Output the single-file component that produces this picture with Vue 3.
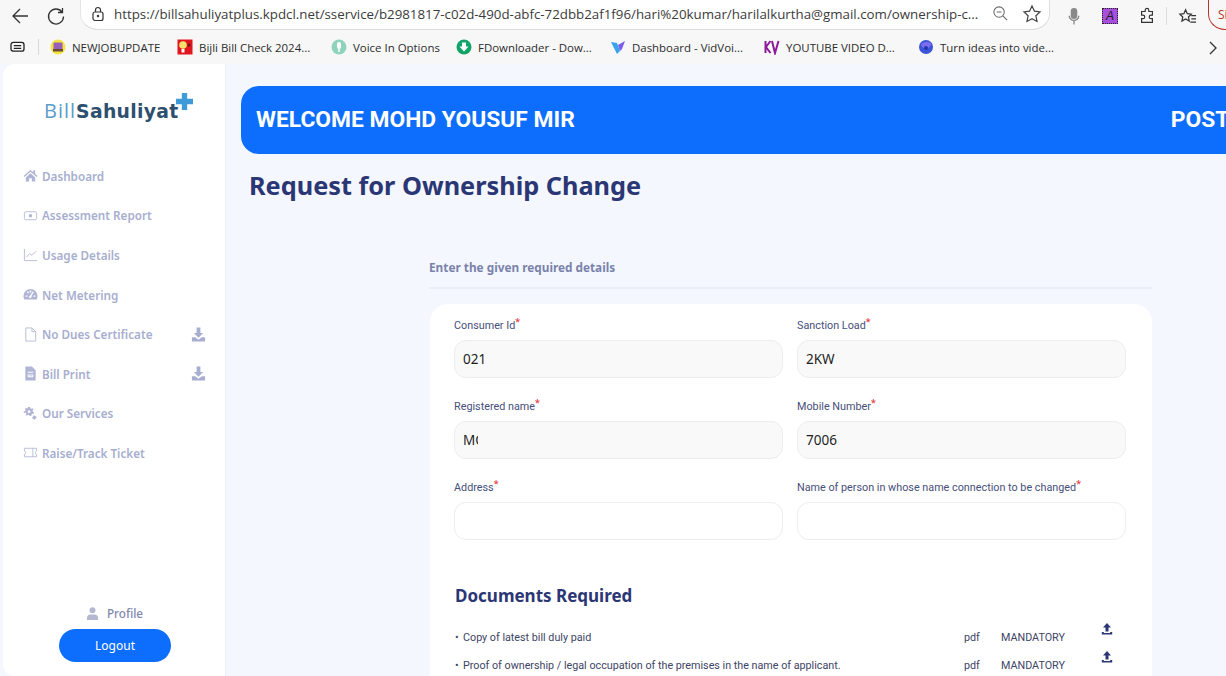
<script setup>
const bookmarks = [
  { icon: 'job', text: 'NEWJOBUPDATE', w: 127 },
  { icon: 'bulb', text: 'Bijli Bill Check 2024...', w: 154 },
  { icon: 'voice', text: 'Voice In Options', w: 125 },
  { icon: 'down', text: 'FDownloader - Dow...', w: 154 },
  { icon: 'vid', text: 'Dashboard - VidVoi...', w: 154 },
  { icon: 'kv', text: 'YOUTUBE VIDEO D...', w: 154 },
  { icon: 'turn', text: 'Turn ideas into vide...', w: 150 }
]

const menu = [
  { icon: 'home', text: 'Dashboard' },
  { icon: 'report', text: 'Assessment Report' },
  { icon: 'chart', text: 'Usage Details' },
  { icon: 'gauge', text: 'Net Metering' },
  { icon: 'file', text: 'No Dues Certificate', download: true },
  { icon: 'print', text: 'Bill Print', download: true },
  { icon: 'gears', text: 'Our Services' },
  { icon: 'ticket', text: 'Raise/Track Ticket' }
]

const fields = [
  { label: 'Consumer Id', value: '021', filled: true },
  { label: 'Sanction Load', value: '2KW', filled: true },
  { label: 'Registered name', value: 'MO', filled: true, cut: true },
  { label: 'Mobile Number', value: '7006', filled: true },
  { label: 'Address', value: '' },
  { label: 'Name of person in whose name connection to be changed', value: '' }
]

const docs = [
  'Copy of latest bill duly paid',
  'Proof of ownership / legal occupation of the premises in the name of applicant.'
]
</script>

<template>
  <div class="screen">
    <header class="toolbar">
      <svg class="tool-icon" viewBox="0 0 20 20"><path d="M18 10H3M10 3l-7 7 7 7" /></svg>
      <svg class="tool-icon" viewBox="0 0 20 20"><path d="M16 6a7.5 7.5 0 1 0 1.5 4.5M16.5 2v4.5H12" /></svg>
      <div class="address">
        <svg class="lock" viewBox="0 0 16 16"><rect x="3" y="6" width="10" height="8.5" rx="2" /><path d="M5.5 6V4a2.5 2.5 0 0 1 5 0v2" /><circle cx="8" cy="10" r=".6" /></svg>
        <span class="url">https://billsahuliyatplus.kpdcl.net/sservice/b2981817-c02d-490d-abfc-72dbb2af1f96/hari%20kumar/harilalkurtha@gmail.com/ownership-c...</span>
        <svg class="addr-icon" viewBox="0 0 18 18"><circle cx="7.5" cy="7.5" r="5.5" /><path d="M11.5 11.5L16 16M5 7.5h5" /></svg>
        <svg class="addr-icon star" viewBox="0 0 18 18"><path d="M9 1.8l2.2 4.7 5 .6-3.7 3.5 1 5.1L9 13.2l-4.500 2.500 1-5.100L1.800 7.100l5-.6z" /></svg>
      </div>
      <svg class="mic" viewBox="0 0 16 20"><rect x="5" y="1" width="6" height="11" rx="3" /><path d="M2.500 9a5.500 5.500 0 0 0 11 0M8 14.500V19" /></svg>
      <div class="ext-a">A</div>
      <svg class="tool-icon puzzle" viewBox="0 0 20 20"><path d="M8 3.500a2 2 0 0 1 4 0V5h4v4h-1.500a2 2 0 0 0 0 4H16v4H4v-4h1.500a2 2 0 0 0 0-4H4V5h4z" /></svg>
      <span class="tool-sep"></span>
      <svg class="tool-icon favs" viewBox="0 0 20 20"><path d="M8 3l1.800 4 4.200.5-3 3 .8 4.200L8 12.600l-3.800 2.100.8-4.200-3-3L6.200 7zM14 9h5M14 12.500h5M13 16h6" /></svg>
      <div class="signin">Si</div>
    </header>

    <nav class="bookmarks">
      <svg class="book-tab" viewBox="0 0 16 14"><rect x="1" y="1.500" width="14" height="9.500" rx="2.500" /><path d="M4 5h8M4 8h8" /></svg>
      <span class="book-sep"></span>
      <div v-for="b in bookmarks" :key="b.text" class="bookmark" :style="{ width: b.w + 'px' }">
        <svg class="book-icon" viewBox="0 0 16 16">
          <template v-if="b.icon === 'job'">
            <circle cx="8" cy="8" r="7.500" fill="#f4e43e" />
            <rect x="3.500" y="3.500" width="9" height="8" rx="1" fill="#9a5fb8" />
            <rect x="3" y="10" width="10" height="2.500" fill="#6b4a3a" />
          </template>
          <template v-else-if="b.icon === 'bulb'">
            <rect x=".5" y=".5" width="15" height="15" fill="#e0161e" />
            <circle cx="6" cy="6" r="3.800" fill="#f8e16a" />
            <rect x="4.500" y="10" width="3" height="3.500" fill="#fff" />
            <circle cx="12" cy="6" r="1.500" fill="#6b1a22" />
          </template>
          <template v-else-if="b.icon === 'voice'">
            <circle cx="8" cy="8" r="7.500" fill="#8fd3bd" />
            <rect x="6" y="3" width="4" height="7" rx="2" fill="#fff" />
            <path d="M8 10v3" stroke="#fff" stroke-width="1.500" />
          </template>
          <template v-else-if="b.icon === 'down'">
            <circle cx="8" cy="8" r="7.500" fill="#12a36a" />
            <path d="M6 3.500h4v4h2.500L8 12.500 3.500 7.500H6z" fill="#fff" />
          </template>
          <template v-else-if="b.icon === 'vid'">
            <path d="M1 3l6 1 3 8-3 3z" fill="#36a3f0" />
            <path d="M8 6l7-4-3 8-2 2z" fill="#7c5cf0" />
          </template>
          <template v-else-if="b.icon === 'kv'">
            <path d="M1.500 2v12M6.500 2L2 8l4.500 6M8 2l3 12 3.500-12" fill="none" stroke="#8d1a9a" stroke-width="2" />
          </template>
          <template v-else>
            <circle cx="8" cy="8" r="7" fill="#3a55d8" />
            <path d="M3 5a7 5 0 0 1 10-1 5 5 0 0 1-10 1z" fill="#7d6cf0" />
            <circle cx="8" cy="9" r="2" fill="#2238a8" />
          </template>
        </svg>
        <span>{{ b.text }}</span>
      </div>
      <svg class="book-more" viewBox="0 0 10 14"><path d="M2 1l6 6-6 6" /></svg>
    </nav>

    <div class="page">
      <aside class="sidebar">
        <div class="logo">
          <span class="logo-bill">Bill</span><span class="logo-name">Sahuliyat</span>
          <svg class="logo-plus" viewBox="0 0 16 16"><path d="M5.500 0h5v5.500H16v5h-5.500V16h-5v-5.500H0v-5h5.500z" /></svg>
        </div>

        <ul class="menu">
          <li v-for="m in menu" :key="m.text" class="menu-item">
            <svg class="menu-icon" viewBox="0 0 16 16">
              <path v-if="m.icon === 'home'" class="solid" d="M8 2L.5 8.500l1 1L8 4l6.500 5.500 1-1-2.500-2.200V2.500h-2v2zM3 10v4.500h3.500v-3.500h3v3.500H13V10L8 5.500z" />
              <template v-else-if="m.icon === 'report'">
                <rect class="line" x="1.500" y="4" width="13" height="8.500" rx="1.500" />
                <circle class="solid" cx="8" cy="8.200" r="1.800" />
              </template>
              <path v-else-if="m.icon === 'chart'" class="line" d="M1.500 2v12.500H15M3.500 11l3.500-4 2.500 2L14 4.500" />
              <path v-else-if="m.icon === 'gauge'" class="solid" d="M8 2a7.500 7.500 0 0 0-7.500 7.500c0 1.400.4 2.700 1 3.800h13c.6-1.100 1-2.400 1-3.800A7.500 7.500 0 0 0 8 2zm-.8 1.800h1.600v2H7.200zM2.800 9h2v1.500h-2zm8.400 0h2v1.500h-2zM4 5.500l1.100-1 1.400 1.400-1.100 1.100zM10.500 4.500l1 1L9 9.700A1.400 1.400 0 1 1 7.700 9z" />
              <path v-else-if="m.icon === 'file'" class="line" d="M3 1h6.500L13.500 5v10H3zM9.500 1v4h4" />
              <path v-else-if="m.icon === 'print'" class="solid" d="M2.500 0.500h7l4 4v11h-11zM5 6v1.300h6V6zm0 3v3h6V9zm1 1h4v1H6z" />
              <path v-else-if="m.icon === 'gears'" class="solid" d="M5.500 1h2l.3 1.400 1.200.6 1.200-.7 1 1.300-.9 1.100.2 1.300 1.300.6-.4 1.700-1.500-.1-.9 1-.1 1.300-1.700.3-.6-1.200-1.400-.2-1 .9-1.300-1 .7-1.300-.5-1.200L.8 7.500V5.800l1.400-.4.6-1.200-.6-1.200L3.400 2l1.200.7zM6.500 4.500a1.500 1.500 0 1 0 0 3 1.500 1.500 0 0 0 0-3zM12.500 10l.5 1 1.200.1.200 1.300-1 .6-.1 1.200-1.300.4-.7-1-1.200-.1-.4-1.200 1-.7v-1.200z" />
              <path v-else class="line" d="M1.500 3.500h13v3a1.800 1.800 0 0 0 0 3.500v2.500h-13V10a1.800 1.800 0 0 0 0-3.500zM10.500 3.500v9" />
            </svg>
            <span class="menu-text">{{ m.text }}</span>
            <svg v-if="m.download" class="menu-dl" viewBox="0 0 16 16"><path d="M6 .5h4v6h3L8 11.500 3 6.500h3zM1 11h3.500L8 13.500 11.500 11H15v4.500H1z" /></svg>
          </li>
        </ul>

        <div class="side-foot">
          <div class="profile">
            <svg class="profile-icon" viewBox="0 0 12 14"><circle cx="6" cy="3.500" r="3.200" /><path d="M0 14v-2.500C0 9.500 1.500 8 3.500 8h5c2 0 3.500 1.500 3.500 3.500V14z" /></svg>
            <span>Profile</span>
          </div>
          <button class="logout">Logout</button>
        </div>
      </aside>

      <main class="main">
        <div class="banner">
          <span>WELCOME MOHD YOUSUF MIR</span>
          <span class="banner-post">POST</span>
        </div>
        <h1 class="title">Request for Ownership Change</h1>

        <section class="form-wrap">
          <h2 class="hint">Enter the given required details</h2>
          <div class="card">
            <div class="grid">
              <div v-for="f in fields" :key="f.label" class="field">
                <label class="label">{{ f.label }}<sup>*</sup></label>
                <div class="input" :class="{ filled: f.filled }">
                  <span :class="{ cut: f.cut }">{{ f.value }}</span>
                </div>
              </div>
            </div>

            <h3 class="docs-title">Documents Required</h3>
            <div class="docs">
              <div v-for="d in docs" :key="d" class="doc">
                <span class="doc-name"><i class="dot">•</i>{{ d }}</span>
                <span class="doc-type">pdf</span>
                <span class="doc-flag">MANDATORY</span>
                <svg class="doc-up" viewBox="0 0 12 12"><path d="M6 .5L10 5H7.500v4h-3V5H2zM.8 9.500h2v1h6.400v-1h2V12H.8z" /></svg>
              </div>
            </div>
          </div>
        </section>
      </main>
    </div>
  </div>
</template>

<style scoped>
.screen {
  width: 1226px;
  height: 676px;
  overflow: hidden;
  display: flex;
  flex-direction: column;
  background: #f4f7fe;
  font-family: "Noto Sans", sans-serif;
}

.toolbar {
  height: 32px;
  display: flex;
  align-items: center;
  background: #f7f7f7;
  padding-left: 10px;
}

.tool-icon {
  width: 20px;
  height: 20px;
  margin-right: 16px;
  fill: none;
  stroke: #333;
  stroke-width: 1.300;
  flex: none;
}

.address {
  width: 970px;
  height: 32px;
  margin: -4px 0 0 -2px;
  flex: none;
  display: flex;
  align-items: center;
  background: #fff;
  border: 1px solid #dcdcdc;
  border-top: none;
  border-radius: 0 0 18px 18px / 0 0 16px 16px;
  border-left-color: #e4e4e4;
  box-sizing: border-box;
  padding-left: 9px;
}

.lock {
  width: 16px;
  height: 16px;
  fill: none;
  stroke: #333;
  stroke-width: 1.200;
  flex: none;
}

.url {
  margin-left: 8px;
  width: 878px;
  flex: none;
  font: 13.320px "Open Sans", sans-serif;
  color: #3b3b3b;
  white-space: nowrap;
}

.addr-icon {
  width: 17px;
  height: 17px;
  fill: none;
  stroke: #666;
  stroke-width: 1.100;
  flex: none;
}

.star {
  margin-left: 13px;
  width: 20px;
  height: 20px;
  stroke: #444;
}

.mic {
  width: 14px;
  height: 19px;
  margin-left: 17px;
  flex: none;
  fill: #8a8a8a;
  stroke: #8a8a8a;
  stroke-width: 1.500;
}

.mic path {
  fill: none;
}

.ext-a {
  width: 16px;
  height: 16px;
  margin-left: 21px;
  background: #a64fdc;
  border: 1px dotted #222;
  box-sizing: border-box;
  font: italic 12px/14px "Liberation Sans", sans-serif;
  text-align: center;
  color: #1c1c1c;
  flex: none;
}

.puzzle {
  margin: 0 0 0 20px;
  width: 18px;
  height: 18px;
}

.tool-sep {
  width: 1px;
  height: 18px;
  background: #ddd;
  margin-left: 10px;
  flex: none;
}

.favs {
  margin: 0 0 0 11px;
  width: 19px;
  height: 19px;
}

.signin {
  width: 34px;
  height: 32px;
  margin: -4px 0 0 11px;
  flex: none;
  border: 1px solid #b8332e;
  border-top: none;
  border-radius: 0 0 17px 17px / 0 0 16px 16px;
  border-right: none;
  box-sizing: border-box;
  font: 12px/34px "Open Sans", sans-serif;
  color: #b8332e;
  padding-left: 9px;
}

.bookmarks {
  height: 32px;
  display: flex;
  align-items: center;
  background: #f7f7f7;
  padding: 0 0 2px 10px;
  box-sizing: border-box;
  font: 11.450px "Open Sans", sans-serif;
  color: #2c2c2c;
  white-space: nowrap;
  position: relative;
}

.book-tab {
  width: 15px;
  height: 13px;
  fill: none;
  stroke: #222;
  stroke-width: 1.400;
  flex: none;
}

.book-sep {
  width: 1px;
  height: 16px;
  background: #d8d8d8;
  margin: 0 11px 0 13px;
  flex: none;
}

.bookmark {
  flex: none;
  display: flex;
  align-items: center;
  gap: 6px;
}

.book-icon {
  width: 16px;
  height: 16px;
  flex: none;
}

.book-more {
  position: absolute;
  right: 8px;
  top: 9px;
  width: 10px;
  height: 14px;
  fill: none;
  stroke: #333;
  stroke-width: 1.300;
}

.page {
  flex: 1;
  min-height: 0;
  display: flex;
  padding-left: 3px;
}

.sidebar {
  width: 223px;
  flex: none;
  background: #fff;
  border-right: 1px solid #e9edf7;
  box-sizing: border-box;
  border-radius: 12px 0 0 12px;
  display: flex;
  flex-direction: column;
  height: 612px;
}

.logo {
  position: relative;
  margin: 35px 0 0 41px;
  height: 24px;
  font-size: 20px;
  line-height: 24px;
  letter-spacing: 1px;
  white-space: nowrap;
}

.logo-bill {
  color: #5a9cc9;
  font-family: "Open Sans", sans-serif;
  font-weight: 400;
}

.logo-name {
  color: #2f4f6f;
  font-family: "DejaVu Sans", sans-serif;
  font-size: 18.800px;
  font-weight: 700;
  letter-spacing: .3px;
}

.logo-plus {
  position: absolute;
  left: 132px;
  top: -6px;
  width: 17px;
  height: 17px;
  fill: #3f9bd8;
}

.menu {
  list-style: none;
  margin: 0;
  padding: 0 19px 0 20px;
  margin-top: 33px;
}

.menu-item {
  height: 39.600px;
  display: flex;
  align-items: center;
  gap: 4px;
  color: #a3aed0;
  font-size: 11.700px;
  font-weight: 600;
}

.menu-icon {
  width: 15px;
  height: 15px;
  flex: none;
}

.menu-icon .solid {
  fill: #b0b5d6;
}

.menu-icon .line {
  fill: none;
  stroke: #b9bdd9;
  stroke-width: 1;
}

.menu-text {
  flex: 1;
  color: #a7aecf;
}

.menu-dl {
  width: 15px;
  height: 15px;
  fill: #a9aed0;
  flex: none;
}

.side-foot {
  margin-top: auto;
  display: flex;
  flex-direction: column;
  align-items: center;
  padding: 0 0 14px 2px;
}

.profile {
  display: flex;
  align-items: center;
  gap: 9px;
  font-size: 11.700px;
  font-weight: 500;
  color: #8087ad;
  margin-bottom: 8px;
}

.profile-icon {
  width: 11px;
  height: 13px;
  fill: #b3b7d0;
}

.logout {
  width: 112px;
  height: 33px;
  border: none;
  border-radius: 17px;
  background: #0d6efd;
  color: #fff;
  font: 12px "Noto Sans", sans-serif;
  padding: 0;
}

.main {
  flex: 1;
  min-width: 0;
  padding: 22px 0 0 15px;
}

.banner {
  height: 68px;
  width: 1100px;
  background: #0d6efd;
  border-radius: 18px 0 0 18px;
  display: flex;
  align-items: center;
  padding: 0 0 2px 15px;
  color: #fff;
  font: 700 22.800px Roboto, sans-serif;
  white-space: nowrap;
  box-sizing: border-box;
}

.banner-post {
  margin-left: 596px;
}

.title {
  margin: 13px 0 0 8px;
  font-size: 25.300px;
  line-height: 36px;
  font-weight: 700;
  color: #2b3674;
}

.form-wrap {
  margin: 56px 0 0 188px;
  width: 723px;
}

.hint {
  margin: 0;
  padding-bottom: 11px;
  font-size: 11.800px;
  line-height: 17px;
  font-weight: 700;
  color: #7a82ab;
  border-bottom: 2px solid #e9edf7;
}

.card {
  margin-top: 15px;
  margin-left: 1px;
  background: #fff;
  border-radius: 18px;
  padding: 11px 26px 40px 24px;
}

.grid {
  display: grid;
  grid-template-columns: 329px 329px;
  column-gap: 14px;
  row-gap: 18px;
}

.label {
  display: block;
  height: 25px;
  font: 10.800px/22px Roboto, sans-serif;
  color: #474f7b;
  white-space: nowrap;
}

.label sup {
  color: #e5343d;
  font-size: 11px;
  line-height: 0;
  vertical-align: 3px;
}

.input {
  height: 38px;
  box-sizing: border-box;
  border: 1px solid #ededf0;
  border-radius: 12px;
  padding-left: 8px;
  font-size: 13.500px;
  line-height: 36px;
  color: #1e1e1e;
  background: #fff;
}

.input.filled {
  background: #f9f9f9;
}

.input .cut {
  display: inline-block;
  width: 15px;
  overflow: hidden;
  vertical-align: top;
}

.docs-title {
  margin: 43px 0 0 1px;
  font-size: 17px;
  line-height: 26px;
  font-weight: 700;
  color: #2b3674;
}

.docs {
  margin-top: 14px;
}

.doc {
  display: flex;
  align-items: center;
  height: 28px;
  font: 10.750px Roboto, sans-serif;
  color: #3e4566;
}

.doc-name {
  width: 510px;
  flex: none;
}

.dot {
  font-style: normal;
  display: inline-block;
  width: 8px;
  margin-left: 1px;
}

.doc-type {
  width: 37px;
  flex: none;
}

.doc-flag {
  width: 100px;
  flex: none;
}

.doc-up {
  width: 12px;
  height: 13px;
  fill: #2b3674;
  margin-top: -18px;
  flex: none;
}
</style>

<style>
html,
body {
  margin: 0;
  overflow: hidden;
}
</style>
